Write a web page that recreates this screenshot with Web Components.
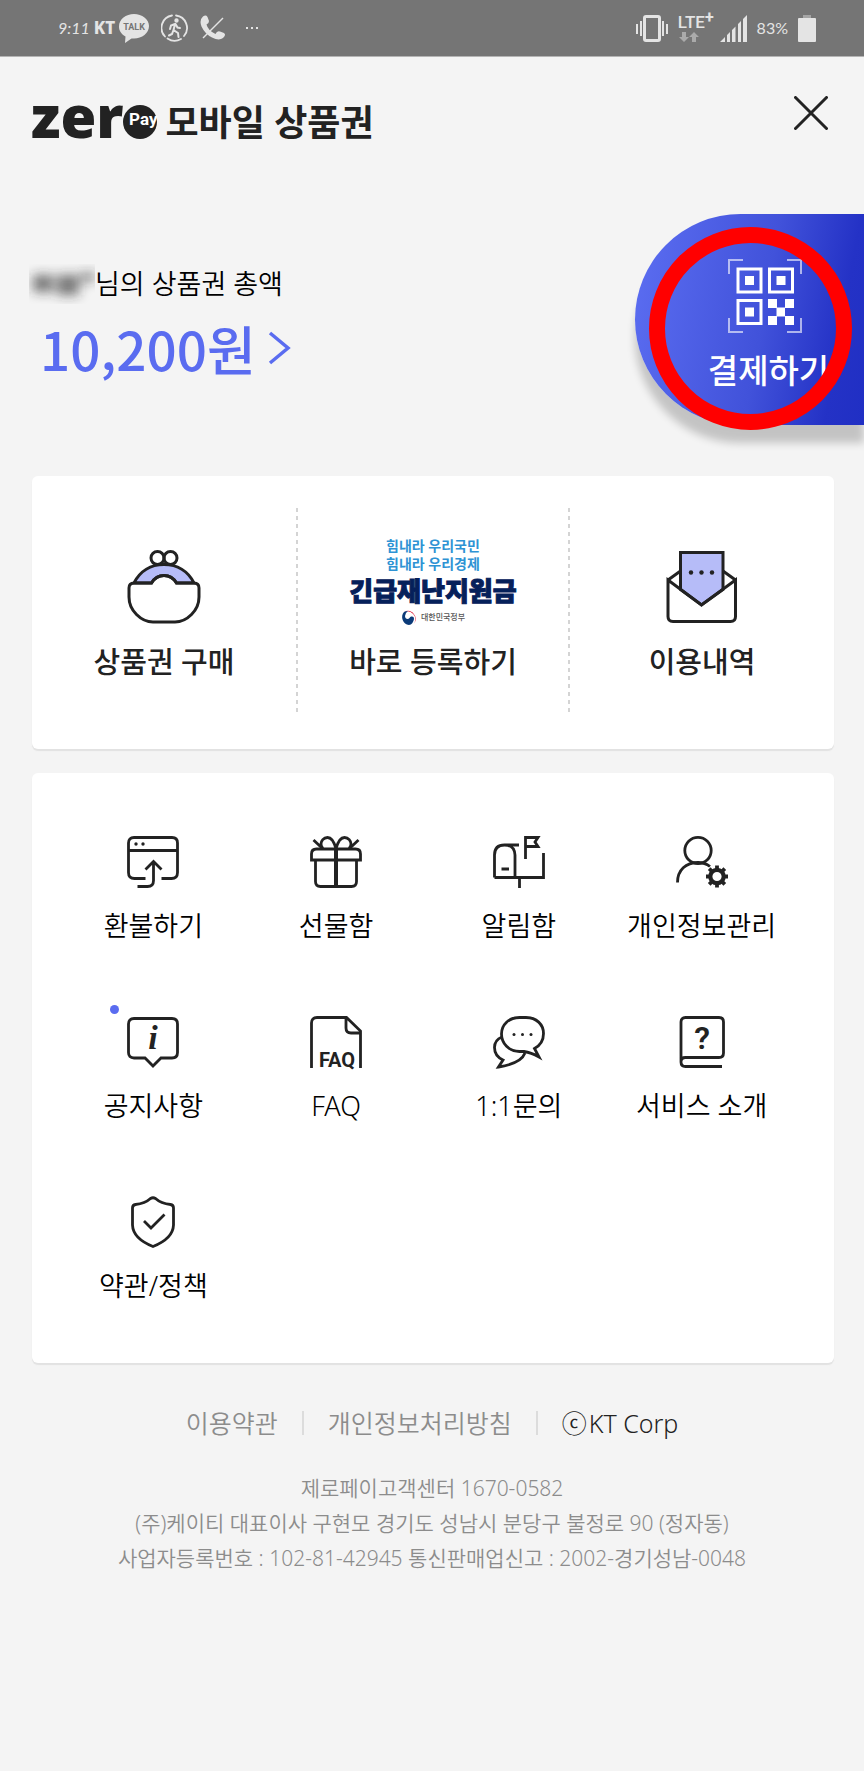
<!DOCTYPE html>
<html lang="ko">
<head>
<meta charset="utf-8">
<meta name="viewport" content="width=device-width, initial-scale=1">
<title>제로페이 모바일 상품권</title>
<style>
  :root {
    --ink: #222;
    --accent: #5a6cf0;
    --page: #f4f4f4;
    --muted: #8c8c8c;
    --card: #fff;
  }
  body {
    margin: 0;
    min-height: 100vh;
    background: var(--page);
    color: var(--ink);
    font-family: "Noto Sans", "Noto Sans CJK KR", sans-serif;
    overflow-x: hidden;
  }
  main { display: block; }
</style>
</head>
<body>
<status-bar></status-bar>
<app-header></app-header>
<main>
  <balance-panel amount="10,200원">님의 상품권 총액</balance-panel>

  <feature-card>
    <feature-tile label="상품권 구매"><app-icon name="purse" size="74"></app-icon></feature-tile>
    <feature-tile label="바로 등록하기"><relief-logo></relief-logo></feature-tile>
    <feature-tile label="이용내역"><app-icon name="letter" size="74"></app-icon></feature-tile>
  </feature-card>

  <menu-card>
    <menu-tile icon="refund" label="환불하기"></menu-tile>
    <menu-tile icon="gift" label="선물함"></menu-tile>
    <menu-tile icon="mailbox" label="알림함"></menu-tile>
    <menu-tile icon="profile" label="개인정보관리"></menu-tile>
    <menu-tile icon="notice" label="공지사항" unread></menu-tile>
    <menu-tile icon="faq" label="FAQ"></menu-tile>
    <menu-tile icon="chat" label="1:1문의"></menu-tile>
    <menu-tile icon="guide" label="서비스 소개"></menu-tile>
    <menu-tile icon="policy" label="약관/정책"></menu-tile>
  </menu-card>
</main>
<site-footer></site-footer>

<script>
// ── Icons ─────────────────────────────────────────────────────────
const ICONS = {
  purse: {
    box: "0 0 74 74",
    width: 3,
    art: `
      <path d="M7 33C13 21 24 14.500 37 14.500S61 21 67 33H49.500C46.500 28 42 25.500 37 25.500S27.500 28 24.500 33Z" fill="#b6bcf8"/>
      <circle cx="30.500" cy="8" r="6.500"/><circle cx="43.500" cy="8" r="6.500"/>
      <path d="M7 33H24.500C27.500 28 32 25.500 37 25.500S46.500 28 49.500 33H67Q72 33 72 38V47Q72 57 64.500 64.500T48 72H26Q17 72 9.500 64.500T2 47V38Q2 33 7 33Z"/>`,
  },
  letter: {
    box: "-1 -1 74 74",
    width: 3,
    art: `
      <path d="M14.500 20L2 29M57 20L69.500 29"/>
      <path d="M14.500 1.500H57V38.500L35.500 54L14.500 38.500Z" fill="#b6bcf8"/>
      <path d="M2 29L35.500 54L69.500 29V65.500Q69.500 70.500 64.500 70.500H7Q2 70.500 2 65.500Z"/>
      <g fill="#222" stroke="none"><circle cx="25" cy="21.500" r="2.200"/><circle cx="35.500" cy="21.500" r="2.200"/><circle cx="46" cy="21.500" r="2.200"/></g>`,
  },
  refund: {
    art: `
      <path d="M18.500 42.500H7.500Q1.500 42.500 1.500 36.500V7Q1.500 1.500 7 1.500H45Q50.500 1.500 50.500 7V36.500Q50.500 42.500 44.500 42.500H34.500M1.500 14.500H50.500"/>
      <path d="M10.500 50.500H20.500Q26.500 50.500 26.500 44.500V26M18.500 33.500L26.500 25.500L34.500 33.500"/>
      <g fill="#222" stroke="none"><circle cx="9" cy="8" r="1.700"/><circle cx="16" cy="8" r="1.700"/></g>`,
  },
  gift: {
    art: `
      <path d="M1.500 24V18Q1.500 13 6.500 13H45.500Q50.500 13 50.500 18V24ZM5.500 24V45.500Q5.500 50.500 10.500 50.500H41.500Q46.500 50.500 46.500 45.500V24"/>
      <path d="M26 13V50" stroke-width="4"/>
      <path d="M26 13C24 5 21 1.500 17.500 1.500C13.500 1.500 11 5 11 8Q11 10.500 13 12.500M26 13C28 5 31 1.500 34.500 1.500C38.500 1.500 41 5 41 8Q41 10.500 39 12.500M3.500 4L12 12M48.500 4L40 12"/>`,
  },
  mailbox: {
    art: `
      <path d="M1.500 41.500V19Q1.500 9 11.500 9T22 19V41.500M26 9H11.500M1.500 41.500H50.500V17M26.500 41.500V52M8.500 33H16"/>
      <path d="M32.500 23V1.500H45L42 6L45 10.500H33"/>`,
  },
  profile: {
    art: `
      <circle cx="22" cy="14.500" r="13.200"/>
      <path d="M1.500 46.500C1.500 34 10 26.500 22 26.500Q29 26.500 34 30.500"/>
      <circle cx="41" cy="40.500" r="6.700" stroke-width="4.200"/>
      <path d="M41 29.500V34M41 47V51.500M30 40.500H34.500M47.500 40.500H52M33.200 32.700L36.500 36M45.500 45L48.800 48.300M48.800 32.700L45.500 36M36.500 45L33.200 48.300" stroke-width="3.800"/>`,
  },
  notice: {
    art: `
      <path d="M7 2.500H45Q50.500 2.500 50.500 8V36.500Q50.500 42 45 42H34L26 50L18 42H7Q1.500 42 1.500 36.500V8Q1.500 2.500 7 2.500Z"/>
      <text x="26" y="33" font-family="Liberation Serif, serif" font-size="34" font-weight="700" font-style="italic">i</text>`,
  },
  faq: {
    art: `
      <path d="M1.500 52V7Q1.500 1.500 7 1.500H36.500L50.500 15V52M36 2V12Q36 17 41 17H50"/>
      <text x="27" y="51" font-family="Roboto, sans-serif" font-size="20" font-weight="700">FAQ</text>`,
  },
  chat: {
    art: `
      <path d="M26.500 1.500H33C43.500 1.500 50.500 8.500 50.500 17.500C50.500 24 47 29.500 41.500 32.500L46 41Q38 36.500 31 35.500H26.500C16 35.500 8.500 27.500 8.500 18S16 1.500 26.500 1.500Z"/>
      <path d="M9 21C4 23 1.500 27 1.500 31.500Q1.500 40 10 44L5.500 51Q28 47.500 32 37"/>
      <g fill="#222" stroke="none"><circle cx="21" cy="18.500" r="1.500"/><circle cx="29.500" cy="18.500" r="1.500"/><circle cx="38" cy="18.500" r="1.500"/></g>`,
  },
  guide: {
    art: `
      <path d="M5 46V6Q5 1.500 9.500 1.500H43Q47.500 1.500 47.500 6V37Q47.500 41.500 43 41.500H9.500Q5 41.500 5 46T9.500 50.500H46"/>
      <text x="26" y="33" font-family="Roboto, sans-serif" font-size="32" font-weight="600">?</text>`,
  },
  policy: {
    art: `
      <path d="M23.500 2.500Q26 1 28.500 2.500Q34 7.500 43.500 8.500Q46.500 9 46.500 12V29Q46 42.500 26 50.500Q6 42.500 5.500 29V12Q5.500 9 8.500 8.500Q18 7.500 23.500 2.500Z"/>
      <path d="M17 25L24 32L37.500 18.500"/>`,
  },
};

class AppIcon extends HTMLElement {
  connectedCallback() {
    const icon = ICONS[this.getAttribute("name")];
    const size = this.getAttribute("size") ?? 52;
    this.attachShadow({ mode: "open" }).innerHTML = `
      <style>
        :host { display: block; line-height: 0; }
        svg { overflow: visible; }
        text { fill: #222; stroke: none; text-anchor: middle; }
      </style>
      <svg width="${size}" height="${size}" viewBox="${icon.box ?? "0 0 52 52"}" fill="none"
        stroke="#222" stroke-width="${icon.width ?? 2.8}" aria-hidden="true">${icon.art}</svg>
    `;
  }
}
customElements.define("app-icon", AppIcon);

// ── Phone status bar ──────────────────────────────────────────────
class StatusBar extends HTMLElement {
  constructor() {
    super();
    this.attachShadow({ mode: "open" }).innerHTML = `
      <style>
        :host {
          display: flex;
          align-items: center;
          justify-content: space-between;
          height: 56px;
          padding: 0 48px 0 58px;
          border-bottom: 1px solid #b4b4b4;
          background: #757575;
          color: #e4e4e4;
          line-height: 24px;
        }
        div { display: flex; align-items: center; gap: 10px; }
        .left { gap: 12px; }
        .time { font: italic 16px/24px Lato, sans-serif; margin-right: -8px; }
        .carrier { font-size: 17px; font-weight: 800; margin-right: -8px; }
        .more { margin-left: 8px; }
        .net { display: grid; justify-items: start; gap: 2px; margin-right: -4px; }
        .net span { display: flex; font: 500 17px/16px Roboto, sans-serif; }
        sup { font-size: 16px; line-height: 8px; font-weight: 700; }
        .pct { font: 16px/24px Lato, sans-serif; }
        svg { display: block; fill: #e4e4e4; }
        .line { fill: none; stroke: #e4e4e4; }
      </style>
      <div class="left">
        <span class="time">9:11</span>
        <span class="carrier">KT</span>
        <svg width="30" height="29" viewBox="0 0 30 29">
          <path d="M15 0C23 0 30 5 30 12S23 24.500 15 24.500H12.500L6 29L6.500 22.500C2 20 0 16.500 0 12.500C0 5 7 0 15 0Z"/>
          <text x="15" y="16" fill="#757575" text-anchor="middle" font-family="Roboto, sans-serif" font-size="9" font-weight="700">TALK</text>
        </svg>
        <svg class="line" width="27" height="28" viewBox="0 0 27 28" stroke-width="1.800" stroke-linecap="round">
          <path d="M11 1.500A12.500 12.500 0 0 0 4 22.500M6.500 24.500A12.500 12.500 0 0 0 20 25M23 22A12.500 12.500 0 0 0 15 1.500"/>
          <circle cx="15.500" cy="6.500" r="1.300" fill="#e4e4e4"/>
          <path d="M14 10L12.500 16L17 19L17.500 23M12.500 16L11 20L8 21.500M14 10L10 11.500L9 15M14.500 10L16.500 13.500L19 14" stroke-width="2"/>
        </svg>
        <svg width="26" height="26" viewBox="0 0 26 26">
          <path d="M3 1.500Q6-.5 7.500 2L9 6Q9 8.500 6.500 9.500Q8 15.500 15.500 19Q17 15.500 20 16.500L24 18Q26.500 20 23 23Q19 26 12 22.500Q5 19 1.500 11.500Q-1 5 3 1.500Z"/>
          <path d="M23 3L3 23" stroke="#e4e4e4" stroke-width="1.500"/>
        </svg>
        <svg class="more" width="12" height="4" viewBox="0 0 12 4"><path d="M0 1h2v2H0ZM5 1h2v2H5ZM10 1h2v2h-2Z"/></svg>
      </div>
      <div>
        <svg class="line" width="32" height="27" viewBox="0 0 32 27" stroke-width="2">
          <rect x="8.500" y="1.500" width="15" height="24" rx="1.500" stroke-width="3"/>
          <path d="M1 9V19M5 6V21M27 6V21M31 9V19"/>
        </svg>
        <div class="net">
          <span>LTE<sup>+</sup></span>
          <svg width="22" height="10" viewBox="0 0 22 10" style="fill:#aaa"><path d="M4 0h4v5h3L6 10L1 5h3ZM14 10h4V5h3L16 0L11 5h3Z"/></svg>
        </div>
        <svg width="27" height="27" viewBox="0 0 27 27"><path d="M0 27L5 22V27ZM7 20L10 17V27H7ZM12 15L15.500 11.500V27H12ZM18 9L21 6V27H18ZM23 4L27 0V27H23Z"/></svg>
        <span class="pct">83%</span>
        <svg width="18" height="27" viewBox="0 0 18 27"><path d="M5 0h8v3H5Z" fill="#a5a5a5"/><rect y="3" width="18" height="24" rx="1"/></svg>
      </div>
    `;
  }
}
customElements.define("status-bar", StatusBar);

// ── App header ────────────────────────────────────────────────────
class AppHeader extends HTMLElement {
  constructor() {
    super();
    this.attachShadow({ mode: "open" }).innerHTML = `
      <style>
        :host {
          display: flex;
          justify-content: space-between;
          align-items: flex-start;
          box-sizing: border-box;
          height: 157px;
          padding: 32px 29px 0 31px;
        }
        h1 {
          display: flex;
          align-items: center;
          margin: 0;
          height: 66px;
          font-size: 36px;
          font-weight: 700;
        }
        .zer { font: 800 58px/48px "Open Sans", sans-serif; padding-bottom: 12px; }
        .pay {
          width: 34px;
          height: 34px;
          margin-right: 8px;
          border-radius: 50%;
          background: var(--ink);
          color: #fff;
          font: 700 17px/28px Roboto, sans-serif;
          text-align: right;
        }
        .name { padding-bottom: 4px; }
        button {
          display: grid;
          place-items: center;
          width: 48px;
          height: 48px;
          padding: 0;
          border: 0;
          background: none;
        }
      </style>
      <h1><span class="zer">zer</span><span class="pay">Pay</span><span class="name">모바일 상품권</span></h1>
      <button type="button" aria-label="닫기">
        <svg width="34" height="34" viewBox="0 0 34 34" stroke="#222" stroke-width="3" stroke-linecap="round"><path d="M1.500 1.500L32.500 32.500M32.500 1.500L1.500 32.500"/></svg>
      </button>
    `;
  }
}
customElements.define("app-header", AppHeader);

// ── Pay button (ring lies over the pill) ──────────────────────────
class PayButton extends HTMLElement {
  constructor() {
    super();
    this.attachShadow({ mode: "open" }).innerHTML = `
      <style>
        :host { display: block; position: relative; width: 229px; }
        button {
          display: flex;
          flex-direction: column;
          align-items: center;
          gap: 14px;
          width: 100%;
          height: 211px;
          padding: 45px 0 0 30px;
          border: 0;
          border-radius: 106px 0 0 106px;
          background: linear-gradient(100deg, #5c6ef2 0%, #4152da 55%, #2432c6 85%, #202fc4 100%);
          box-shadow: 0 18px 8px rgba(0, 0, 0, .2);
          color: #fff;
          font: 500 33px/48px "Noto Sans", "Noto Sans CJK KR", sans-serif;
        }
        button span { padding-left: 8px; }
        .ring {
          position: absolute;
          top: 13px;
          left: 14px;
          box-sizing: border-box;
          width: 203px;
          height: 203px;
          border: 16px solid #f00;
          border-radius: 50%;
          pointer-events: none;
        }
      </style>
      <button type="button">
        <svg width="74" height="74" viewBox="0 0 74 74" fill="none" stroke="#fff" stroke-width="3">
          <path d="M1 15V1H15M59 1H73V15M73 59V73H59M15 73H1V59" stroke-width="2" opacity=".6"/>
          <path d="M10 10H33V33H10ZM41.500 10H64.500V33H41.500ZM10 41.500H33V64.500H10Z"/>
          <path d="M17 17h9v9h-9ZM48.500 17h9v9h-9ZM17 48.500h9v9h-9ZM40 40h9v8.500h8V40h9v9h-9v8h9v9h-9v-8.500h-8V66h-9v-9h8.500v-8H40Z" fill="#fff" stroke="none"/>
        </svg>
        <span>결제하기</span>
      </button>
      <div class="ring"></div>
    `;
  }
}
customElements.define("pay-button", PayButton);

// ── Balance panel ─────────────────────────────────────────────────
class BalancePanel extends HTMLElement {
  connectedCallback() {
    this.attachShadow({ mode: "open" }).innerHTML = `
      <style>
        :host {
          display: flex;
          justify-content: space-between;
          align-items: flex-start;
          margin-bottom: 51px;
        }
        .info { padding: 50px 0 0 29px; }
        p {
          display: flex;
          align-items: center;
          margin: 0;
          font-size: 27px;
          line-height: 40px;
          font-weight: 350;
          color: #000;
        }
        .name { width: 66px; height: 40px; overflow: hidden; }
        a {
          display: flex;
          align-items: center;
          gap: 12px;
          padding-left: 11px;
          color: var(--accent);
          font: 500 53px/88px "Noto Sans CJK KR", sans-serif;
          text-decoration: none;
        }
      </style>
      <div class="info">
        <p>
          <svg class="name" viewBox="0 0 66 40" aria-hidden="true">
            <filter id="soft" x="-50%" y="-50%" width="200%" height="200%"><feGaussianBlur stdDeviation="6"/></filter>
            <g filter="url(#soft)" fill="#222" opacity=".6"><rect x="4" y="11" width="20" height="17"/><rect x="28" y="11" width="22" height="20"/><rect x="52" y="9" width="14" height="8"/></g>
          </svg>
          <span><slot></slot></span>
        </p>
        <a href="#balance"><span>${this.getAttribute("amount")}</span>
          <svg width="24" height="34" viewBox="0 0 24 34" fill="none" stroke="#5a6cf0" stroke-width="3.500"><path d="M2 2L20 17L2 32"/></svg>
        </a>
      </div>
      <pay-button></pay-button>
    `;
  }
}
customElements.define("balance-panel", BalancePanel);

// ── Feature card: three big shortcuts ─────────────────────────────
class FeatureCard extends HTMLElement {
  constructor() {
    super();
    this.attachShadow({ mode: "open" }).innerHTML = `
      <style>
        :host {
          display: grid;
          grid-template-columns: 264fr 272fr 266fr;
          margin: 0 30px 24px 32px;
          padding: 32px 0 35px;
          border-radius: 6px;
          background: var(--card);
          box-shadow: 0 2px 1px #e2e2e2;
        }
        ::slotted(:not(:first-child)) {
          padding-left: 2px;
          background: repeating-linear-gradient(#d4d4d4 0 4px, transparent 4px 8px) left / 2px 100% no-repeat;
        }
      </style>
      <slot></slot>
    `;
  }
}
customElements.define("feature-card", FeatureCard);

class FeatureTile extends HTMLElement {
  connectedCallback() {
    this.attachShadow({ mode: "open" }).innerHTML = `
      <style>
        :host { display: block; }
        a {
          display: flex;
          flex-direction: column;
          align-items: center;
          gap: 5px;
          padding: 29px 0 32px;
          color: var(--ink);
          text-decoration: none;
          font-size: 29px;
          line-height: 40px;
          font-weight: 500;
        }
        .art { display: grid; place-items: center; height: 100px; }
      </style>
      <a href="#feature"><span class="art"><slot></slot></span><span>${this.getAttribute("label")}</span></a>
    `;
  }
}
customElements.define("feature-tile", FeatureTile);

class ReliefLogo extends HTMLElement {
  constructor() {
    super();
    this.attachShadow({ mode: "open" }).innerHTML = `
      <style>
        :host { display: grid; justify-items: center; padding-bottom: 12px; text-align: center; }
        .cheer { color: #2e93d4; font-size: 14px; line-height: 18px; font-weight: 600; }
        .fund { color: #06205a; font-size: 26px; line-height: 36px; font-weight: 900; -webkit-text-stroke: 1px #06205a; }
        .gov { display: flex; align-items: center; gap: 4px; color: #555; font-size: 8px; line-height: 16px; }
      </style>
      <span class="cheer">힘내라 우리국민<br>힘내라 우리경제</span>
      <span class="fund">긴급재난지원금</span>
      <span class="gov">
        <svg width="16" height="16" viewBox="0 0 16 16">
          <path d="M3 3A8 8 0 0 1 13 14.500A7 7 0 0 0 13.500 6A7 7 0 0 0 3 3Z" fill="#e0203c"/>
          <path d="M3 3A8 8 0 0 0 8 16Q12 15.500 13 10C13 7 10 7 8.500 9S4 10 4 7Q4 4 7 2Q4.500 2 3 3Z" fill="#0b3a78"/>
        </svg>
        <span>대한민국정부</span>
      </span>
    `;
  }
}
customElements.define("relief-logo", ReliefLogo);

// ── Menu card: icon grid ──────────────────────────────────────────
class MenuCard extends HTMLElement {
  constructor() {
    super();
    this.attachShadow({ mode: "open" }).innerHTML = `
      <style>
        :host {
          display: grid;
          grid-template-columns: repeat(4, 1fr);
          row-gap: 72px;
          margin: 0 30px 42px 32px;
          padding: 63px 41px 59px 30px;
          border-radius: 6px;
          background: var(--card);
          box-shadow: 0 2px 1px #e2e2e2;
        }
      </style>
      <slot></slot>
    `;
  }
}
customElements.define("menu-card", MenuCard);

class MenuTile extends HTMLElement {
  connectedCallback() {
    this.attachShadow({ mode: "open" }).innerHTML = `
      <style>
        :host { display: block; }
        a {
          display: flex;
          flex-direction: column;
          align-items: center;
          gap: 20px;
          color: #000;
          text-decoration: none;
          font-size: 27px;
          line-height: 36px;
          font-weight: 350;
          white-space: nowrap;
        }
        .art { position: relative; }
        :host([unread]) .art::before {
          content: "";
          position: absolute;
          top: -11px;
          left: -17px;
          width: 9px;
          height: 9px;
          border-radius: 50%;
          background: var(--accent);
        }
      </style>
      <a href="#menu">
        <span class="art"><app-icon name="${this.getAttribute("icon")}"></app-icon></span>
        <span>${this.getAttribute("label")}</span>
      </a>
    `;
  }
}
customElements.define("menu-tile", MenuTile);

// ── Footer ────────────────────────────────────────────────────────
class SiteFooter extends HTMLElement {
  constructor() {
    super();
    this.attachShadow({ mode: "open" }).innerHTML = `
      <style>
        :host {
          display: block;
          color: var(--muted);
          font-weight: 350;
          text-align: center;
        }
        nav {
          display: flex;
          justify-content: center;
          align-items: center;
          gap: 24px;
          margin-bottom: 30px;
          font-size: 25px;
          line-height: 36px;
        }
        a { color: inherit; text-decoration: none; }
        i { width: 2px; height: 24px; background: #dcdcdc; }
        .corp { display: flex; gap: 2px; color: var(--ink); }
        address { font-size: 21px; line-height: 35px; font-style: normal; }
      </style>
      <nav>
        <a href="#terms">이용약관</a><i></i>
        <a href="#privacy">개인정보처리방침</a><i></i>
        <span class="corp"><span>ⓒ</span><span>KT Corp</span></span>
      </nav>
      <address>
        제로페이고객센터 1670-0582<br>
        (주)케이티 대표이사 구현모 경기도 성남시 분당구 불정로 90 (정자동)<br>
        사업자등록번호 : 102-81-42945 통신판매업신고 : 2002-경기성남-0048
      </address>
    `;
  }
}
customElements.define("site-footer", SiteFooter);
</script>
</body>
</html>
